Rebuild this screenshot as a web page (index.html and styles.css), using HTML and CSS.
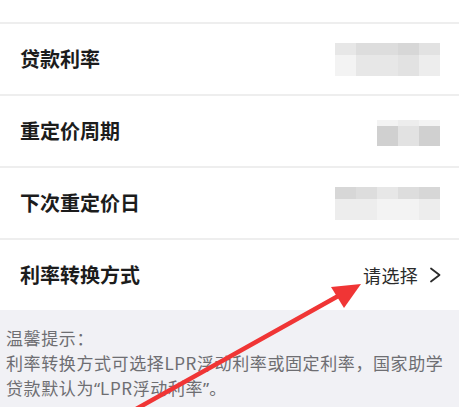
FILE: index.html
```html
<!DOCTYPE html>
<html lang="zh-CN">
<head>
<meta charset="utf-8">
<title>利率转换</title>
<link rel="stylesheet" href="styles.css">
</head>
<body>
<div class="page">
  <div class="list">
    <div class="top-gap"></div>
    <div class="row">
      <span class="label">贷款利率</span>
      <div class="mosaic">
        <span class="s3"></span><span class="s5"></span><span class="s5"></span><span class="s6"></span><span class="s4"></span>
        <span class="s1"></span><span class="s3"></span><span class="s3"></span><span class="s4"></span><span class="s2"></span>
      </div>
    </div>
    <div class="row">
      <span class="label">重定价周期</span>
      <div class="mosaic mosaic-small">
        <span class="s1"></span><span class="s2"></span><span class="s1"></span>
        <span class="s7"></span><span class="s4"></span><span class="s7"></span>
      </div>
    </div>
    <div class="row">
      <span class="label">下次重定价日</span>
      <div class="mosaic">
        <span class="s6"></span><span class="s5"></span><span class="s3"></span><span class="s5"></span><span class="s6"></span>
        <span class="s2"></span><span class="s2"></span><span class="s1"></span><span class="s1"></span><span class="s2"></span>
      </div>
    </div>
    <div class="row">
      <span class="label">利率转换方式</span>
      <span class="select">请选择<svg class="chev" width="12" height="16" viewBox="0 0 12 16"><polyline points="2,1.5 10.5,8 2,14.5" fill="none" stroke="#2b2b2b" stroke-width="1.8" stroke-linecap="round" stroke-linejoin="round"/></svg></span>
    </div>
  </div>
  <div class="tips">
    <p>温馨提示：</p>
    <p>利率转换方式可选择LPR浮动利率或固定利率，国家助学</p>
    <p>贷款默认为<span class="q">“</span>LPR浮动利率<span class="q">”</span>。</p>
  </div>
  <svg class="arrow" width="459" height="407" viewBox="0 0 459 407">
    <line x1="120" y1="418" x2="340" y2="295" stroke="#f03535" stroke-width="4.5" stroke-linecap="round"/>
    <polygon points="361,284 331,287 344,308" fill="#f03535"/>
  </svg>
</div>
</body>
</html>
```

FILE: styles.css
```css
html, body {
  margin: 0;
  padding: 0;
  background: #ffffff;
}

.page {
  position: relative;
  width: 459px;
  height: 407px;
  overflow: hidden;
  font-family: "Noto Sans CJK SC", "Noto Sans", sans-serif;
  background: #f1f1f5;
}

.list {
  background: #ffffff;
}

.top-gap {
  height: 22px;
  border-bottom: 2px solid #eeeeee;
}

.row {
  height: 70px;
  display: flex;
  align-items: center;
  justify-content: space-between;
  padding: 0 18px 0 20px;
  border-bottom: 2px solid #eeeeee;
}

.row:last-child {
  border-bottom: none;
}

.label {
  font-size: 20px;
  font-weight: 700;
  color: #1c1c1c;
  line-height: 1;
}

.mosaic {
  display: grid;
  grid-template-columns: repeat(5, 21px);
  grid-template-rows: 12px 21px;
  margin-right: 1px;
}

.mosaic-small {
  grid-template-columns: repeat(3, 21px);
  grid-template-rows: 6px 20px;
  margin-top: 4px;
}

.s1 { background: #f3f3f3; }
.s2 { background: #ededed; }
.s3 { background: #e7e7e7; }
.s4 { background: #e2e2e2; }
.s5 { background: #dddddd; }
.s6 { background: #d7d7d7; }
.s7 { background: #d0d0d0; }

.select {
  display: flex;
  align-items: center;
  gap: 11px;
  font-size: 18px;
  letter-spacing: 0.3px;
  color: #2b2b2b;
  line-height: 1;
}

.chev {
  display: block;
}

.tips {
  padding: 15px 0 0 6px;
  font-size: 17px;
  letter-spacing: 0.6px;
  line-height: 25px;
  color: #6e6e72;
}

.tips p {
  margin: 0;
  white-space: nowrap;
}

.q {
  font-family: "Noto Sans", sans-serif;
  letter-spacing: 0;
}

.arrow {
  position: absolute;
  left: 0;
  top: 0;
  pointer-events: none;
}
```
